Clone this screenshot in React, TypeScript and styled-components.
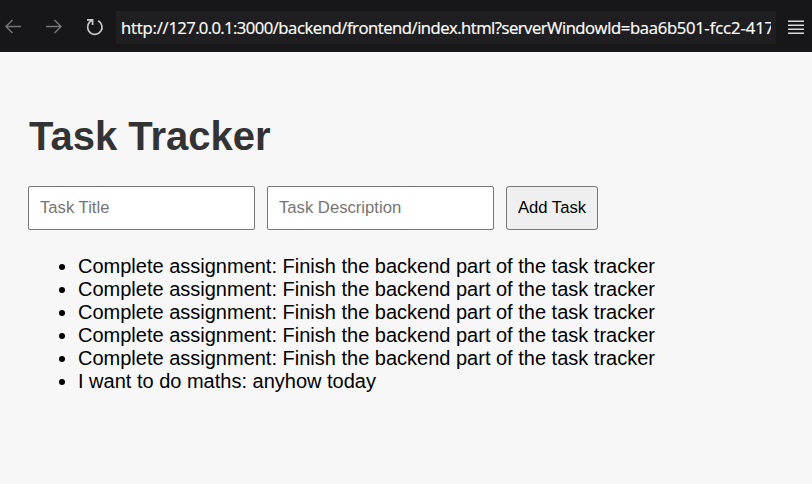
import React from "react";
import styled, { createGlobalStyle } from "styled-components";

const GlobalStyle = createGlobalStyle`
  body { margin: 0; background: #f7f7f7; font-family: "Liberation Sans", Arial, sans-serif; color: #000; overflow: hidden; }
  * { box-sizing: border-box; }
`;

const Toolbar = styled.header`
  height: 52px;
  background: #171719;
  display: flex;
  align-items: flex-start;
  padding-top: 11px;
`;

const NavButton = styled.span<{ $left: number; $color: string }>`
  flex: none;
  width: 18px;
  height: 32px;
  margin-left: ${(p) => p.$left}px;
  display: flex;
  align-items: center;
  color: ${(p) => p.$color};
`;

const Address = styled.div`
  flex: none;
  width: 660px;
  height: 33px;
  margin-left: 12px;
  padding-left: 5px;
  background: #1f1f21;
  color: #fff;
`;

const Url = styled.div`
  width: 650px;
  overflow: hidden;
  white-space: nowrap;
  font: 16.67px/33px "Open Sans", "Noto Sans", sans-serif;
  -webkit-text-stroke: 0.2px #fff;
`;

const UrlPart = styled.span<{ $spacing: number }>`
  letter-spacing: ${(p) => p.$spacing}px;
`;

const Page = styled.main`
  padding: 59px 28px 0;
`;

const Title = styled.h1`
  margin: 0;
  padding-left: 1px;
  color: #333;
  font-size: 40px;
  line-height: 50px;
`;

const Form = styled.form`
  display: flex;
  gap: 12px;
  margin-top: 25px;
`;

const Field = styled.input`
  width: 227px;
  height: 44px;
  padding: 0 11px;
  border: 1px solid #767676;
  border-radius: 2px;
  background: #fff;
  font: 16.67px "Liberation Sans", Arial, sans-serif;
  &::placeholder { color: #757575; }
`;

const AddButton = styled.button`
  width: 92px;
  height: 44px;
  padding: 0;
  border: 1px solid #767676;
  border-radius: 3px;
  background: #efefef;
  color: #000;
  font: 16.67px "Liberation Sans", Arial, sans-serif;
`;

const TaskList = styled.ul`
  margin: 25px 0 0;
  padding-left: 50px;
  font-size: 20px;
  line-height: 23px;
`;

const urlParts: [string, number][] = [
  ["http://", -0.2],
  ["127.0.0.1:", -0.64],
  ["3000", -0.55],
  ["/backend", -0.42],
  ["/frontend", -0.47],
  ["/index.html?", -0.52],
  ["serverWindowId", -0.5],
  ["=baa6b501", -0.33],
  ["-fcc2-417", -0.08],
];

const tasks = [
  ...Array(5).fill("Complete assignment: Finish the backend part of the task tracker"),
  "I want to do maths: anyhow today",
];

export default function App() {
  return (
    <>
      <GlobalStyle />
      <Toolbar>
        <NavButton $left={4} $color="#747474">
          <svg width="18" height="18" viewBox="0 0 18 18" fill="none" stroke="currentColor" strokeWidth="1.5"><path d="M17 8.5H1.5M8.5 2L2 8.5L8.5 15" /></svg>
        </NavButton>
        <NavButton $left={23} $color="#747474">
          <svg width="18" height="18" viewBox="0 0 18 18" fill="none" stroke="currentColor" strokeWidth="1.5"><path d="M1 8.5H16.5M9.5 2L16 8.5L9.5 15" /></svg>
        </NavButton>
        <NavButton $left={23} $color="#c8c8c8">
          <svg width="18" height="18" viewBox="0 0 18 18" fill="none" stroke="currentColor" strokeWidth="1.7"><path d="M12.2 2.8A7.2 7.2 0 1 1 3.6 4.2L6 2M1 1.8H6.6V7" /></svg>
        </NavButton>
        <Address>
          <Url>{urlParts.map(([text, spacing]) => <UrlPart key={text} $spacing={spacing}>{text}</UrlPart>)}</Url>
        </Address>
        <NavButton $left={11} $color="#d8d8d8">
          <svg width="18" height="18" viewBox="0 0 18 18" fill="none" stroke="currentColor" strokeWidth="1.4"><path d="M1 3.2H17M1 7.2H17M1 11.2H17M1 15.2H17" /></svg>
        </NavButton>
      </Toolbar>
      <Page>
        <Title>Task Tracker</Title>
        <Form>
          <Field placeholder="Task Title" />
          <Field placeholder="Task Description" />
          <AddButton type="button">Add Task</AddButton>
        </Form>
        <TaskList>{tasks.map((task, i) => <li key={i}>{task}</li>)}</TaskList>
      </Page>
    </>
  );
}
